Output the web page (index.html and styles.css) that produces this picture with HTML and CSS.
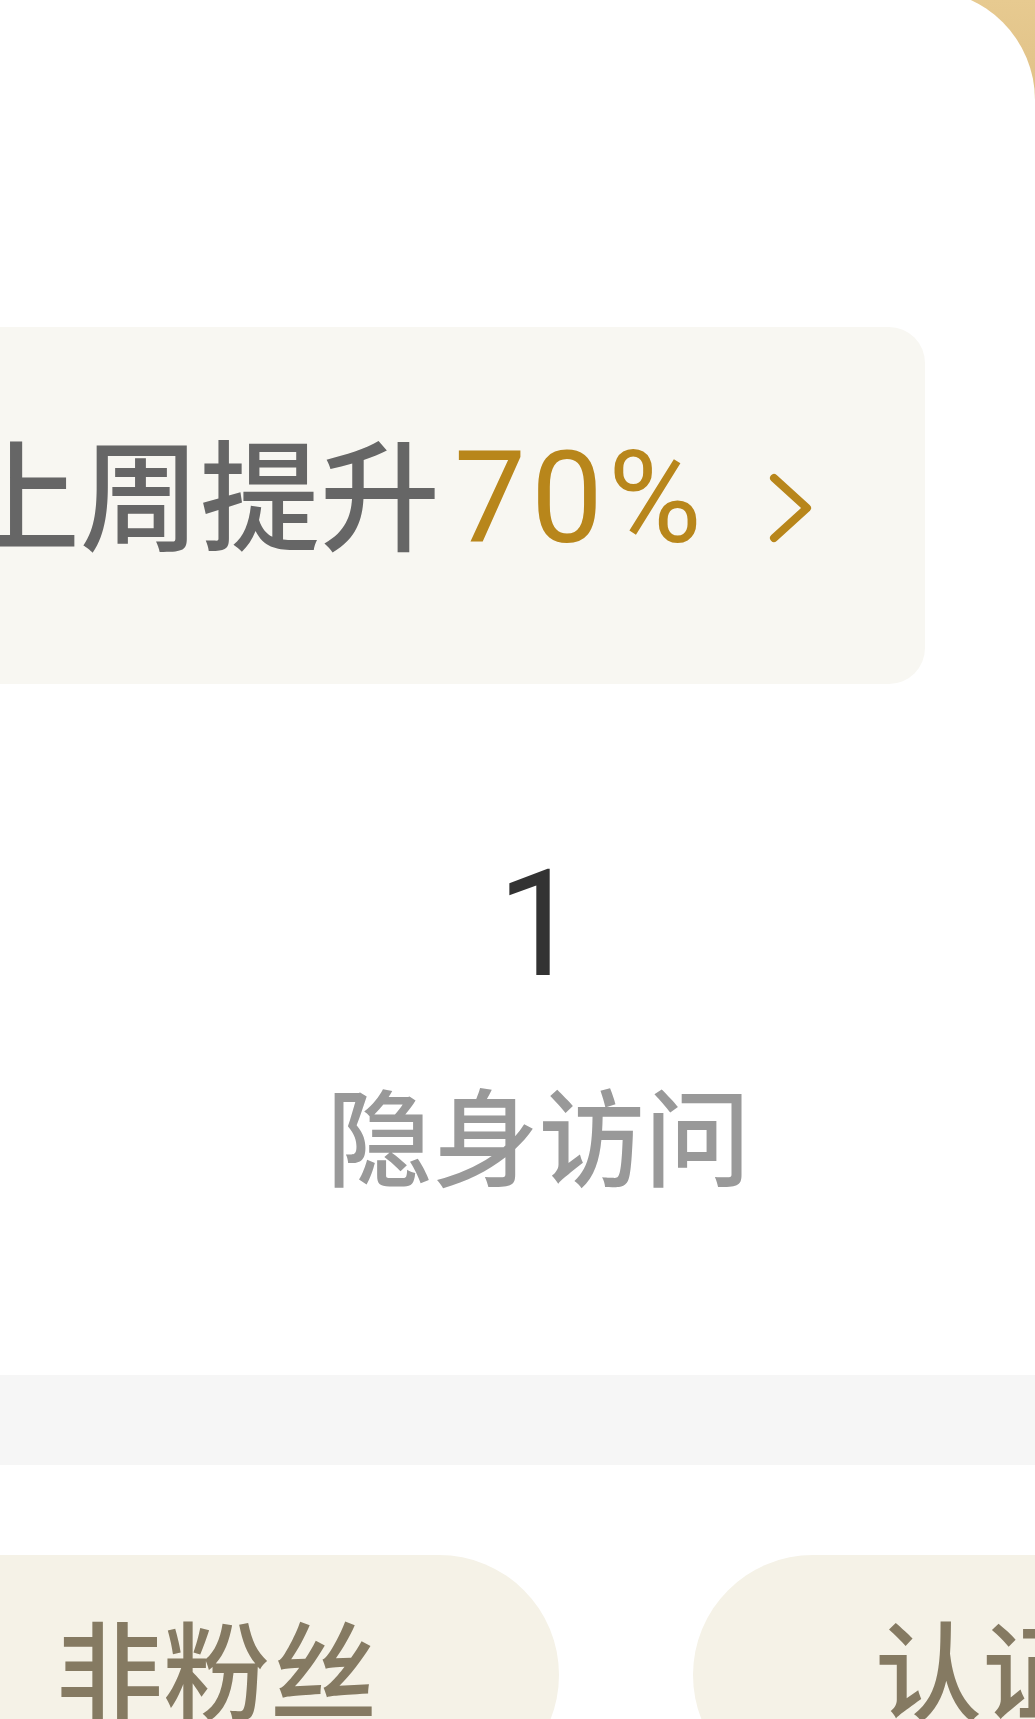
FILE: index.html
```html
<!DOCTYPE html>
<html lang="zh-CN">
<head>
    <meta charset="UTF-8">
    <meta name="viewport" content="width=device-width, initial-scale=1.0">
    <title>访客</title>
    <link rel="stylesheet" href="styles.css">
</head>
<body>
    <div class="hero"></div>
    <div class="card">
        <div class="boost">
            <div class="boostLine">
                <span class="boostText">上周提升</span><span class="boostValue">70%</span><svg class="boostArrow" width="46" height="76" viewBox="0 0 46 76">
                    <polyline points="6,8 39,38 6,68" fill="none" stroke="#b8861b" stroke-width="8" stroke-linecap="round" stroke-linejoin="round"/>
                </svg>
            </div>
        </div>
        <div class="stat">
            <div class="statNumber">1</div>
            <div class="statLabel">隐身访问</div>
        </div>
    </div>
    <div class="divider"></div>
    <div class="tabs">
        <div class="tab">非粉丝</div>
        <div class="tab">认证用户</div>
    </div>
</body>
</html>
```

FILE: styles.css
```css
body {
    margin: 0;
    height: 1719px;
    overflow: hidden;
    background: #fff;
    font-family: "Noto Sans CJK SC", "Noto Sans", sans-serif;
}
.hero {
    height: 110px;
    background-image: linear-gradient(to bottom, #e7ca90, #dfc086);
}
.card {
    margin-top: -120px;
    padding-top: 337px;
    padding-bottom: 190px;
    background: #fff;
    border-top-right-radius: 110px;
}
.boost {
    display: flex;
    align-items: center;
    box-sizing: border-box;
    margin-left: -46px;
    width: 971px;
    height: 357px;
    padding: 0 0 20px 6px;
    background-color: #f8f7f2;
    border-radius: 36px;
    white-space: nowrap;
}
.boostLine {
    font-size: 120px;
    line-height: 1;
    font-weight: 500;
}
.boostText {
    color: #666;
}
.boostValue {
    margin-left: 14px;
    font-family: Roboto, "Noto Sans", sans-serif;
    font-size: 128px;
    font-weight: 400;
    letter-spacing: 5px;
    color: #b8861b;
}
.boostArrow {
    margin-left: 61px;
    vertical-align: -4px;
}
.stat {
    display: flex;
    flex-direction: column;
    align-items: center;
    margin-top: 167px;
    padding-left: 42px;
}
.statNumber {
    font-family: Roboto, "Noto Sans", sans-serif;
    font-size: 148px;
    line-height: 1;
    color: #333;
}
.statLabel {
    margin-top: 80px;
    font-size: 106px;
    line-height: 1;
    font-weight: 500;
    color: #999;
}
.divider {
    height: 90px;
    background-color: #f6f6f6;
}
.tabs {
    display: flex;
    gap: 134px;
    margin: 90px 0 0 -126px;
}
.tab {
    flex-shrink: 0;
    height: 240px;
    box-sizing: border-box;
    padding: 57px 182px 0;
    background-color: #f5f2e7;
    border-radius: 120px;
    font-size: 107px;
    line-height: 1;
    font-weight: 500;
    color: #857a62;
    white-space: nowrap;
}
```
